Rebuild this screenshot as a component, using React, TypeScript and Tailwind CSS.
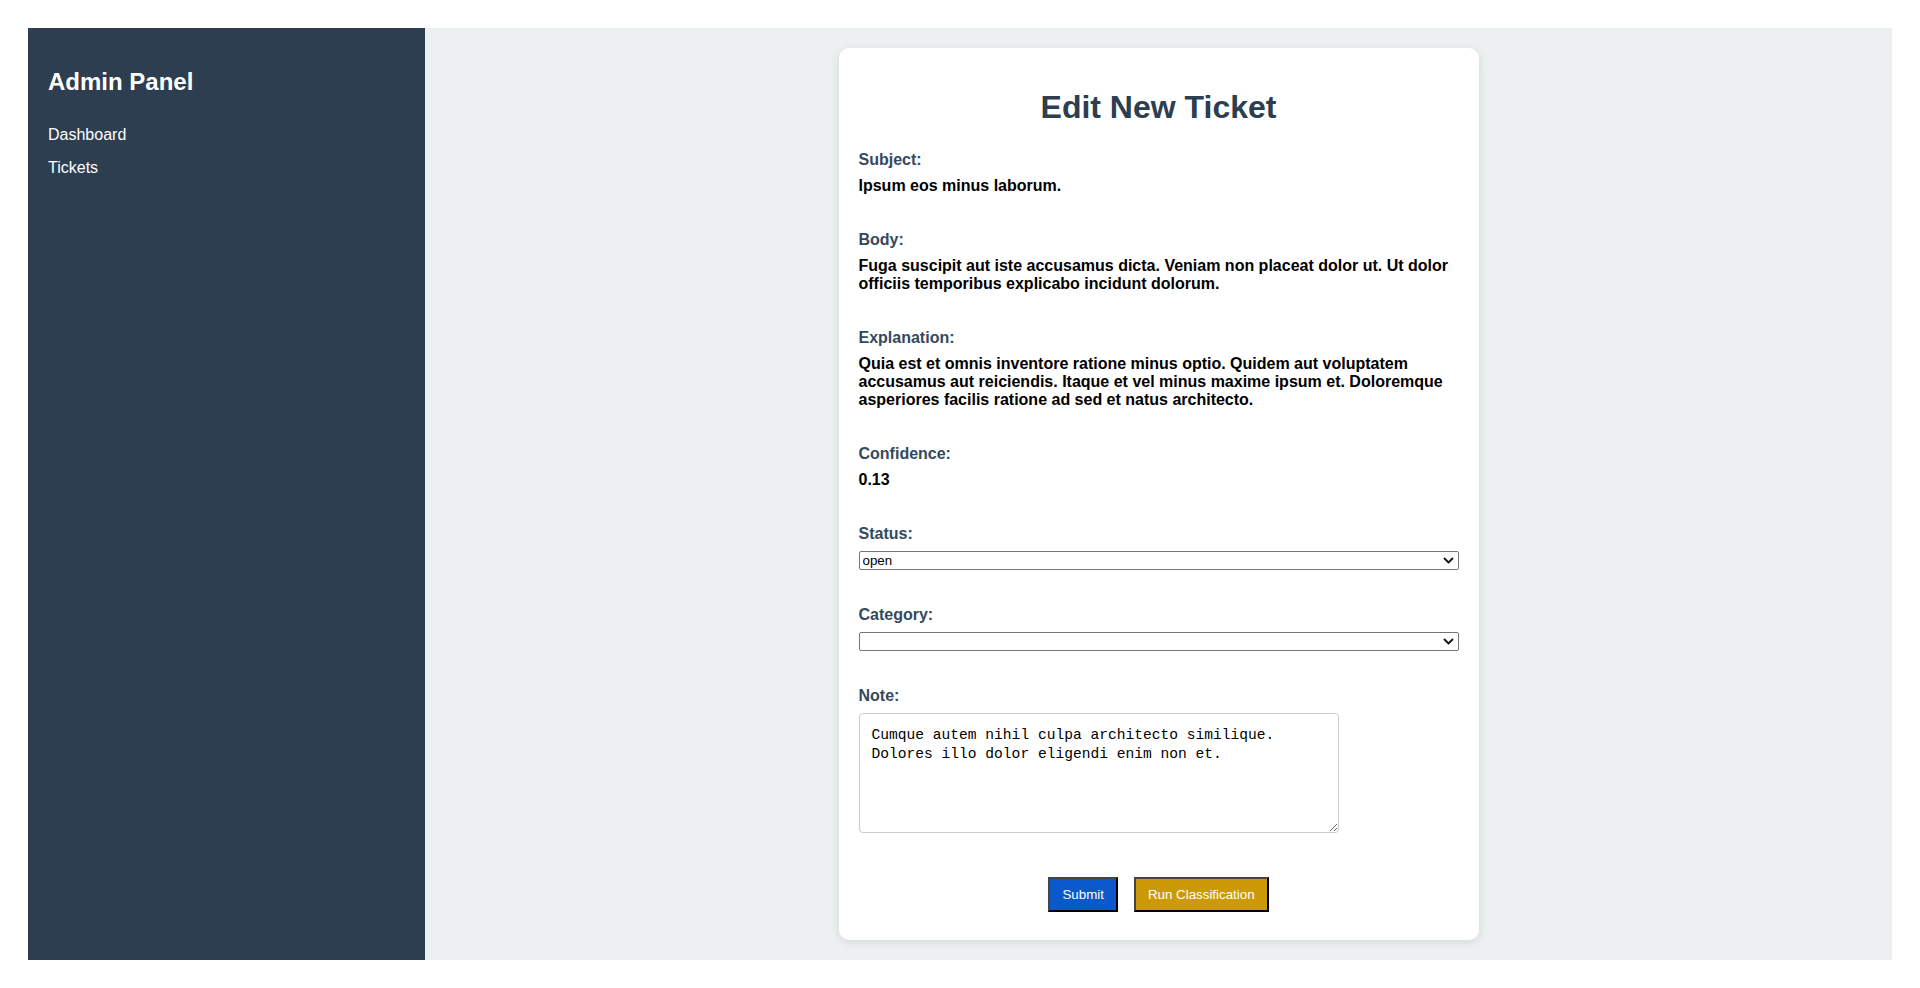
import React, { useState } from 'react';

const fields = [
  { label: 'Subject:', value: 'Ipsum eos minus laborum.' },
  {
    label: 'Body:',
    value:
      'Fuga suscipit aut iste accusamus dicta. Veniam non placeat dolor ut. Ut dolor officiis temporibus explicabo incidunt dolorum.',
  },
  {
    label: 'Explanation:',
    value:
      'Quia est et omnis inventore ratione minus optio. Quidem aut voluptatem accusamus aut reiciendis. Itaque et vel minus maxime ipsum et. Doloremque asperiores facilis ratione ad sed et natus architecto.',
  },
  { label: 'Confidence:', value: '0.13' },
];

const Label = ({ children }: { children: React.ReactNode }) => (
  <label className="block mb-2 text-base font-bold leading-[normal] text-[#34495e]">{children}</label>
);

// select with the bold chevron drawn over its right end
const Select = ({
  value,
  onChange,
  options,
}: {
  value: string;
  onChange: (v: string) => void;
  options: string[];
}) => (
  <div className="relative">
    <select
      value={value}
      onChange={(e) => onChange(e.target.value)}
      className="block h-[19px] w-full appearance-none rounded-[2px] border border-[#767676] bg-white pl-[3px] pr-5 py-0 text-[13.33px] leading-[normal] text-black"
    >
      {options.map((o) => (
        <option key={o} value={o}>
          {o}
        </option>
      ))}
    </select>
    <svg
      className="pointer-events-none absolute right-[5px] top-[6px]"
      width="11"
      height="7"
      viewBox="0 0 11 7"
      fill="none"
    >
      <path d="M1 1l4.5 4.5L10 1" stroke="#111" strokeWidth="1.8" />
    </svg>
  </div>
);

export default function App() {
  const [status, setStatus] = useState('open');
  const [category, setCategory] = useState('');
  const [note, setNote] = useState(
    'Cumque autem nihil culpa architecto similique.\nDolores illo dolor eligendi enim non et.'
  );

  return (
    <div className="bg-white p-[28px] font-['Liberation_Sans',Arial,sans-serif]">
      <div className="flex h-[932px]">
        {/* Sidebar */}
        <aside className="w-[397px] shrink-0 bg-[#2c3e50] px-5 pt-5 text-white">
          <h2 className="mt-5 text-2xl font-bold leading-[normal]">Admin Panel</h2>
          <ul className="mt-[30px] flex flex-col gap-[14.5px] text-base leading-[normal]">
            <li>
              <a href="#">Dashboard</a>
            </li>
            <li>
              <a href="#">Tickets</a>
            </li>
          </ul>
        </aside>

        {/* Main */}
        <main className="flex-1 bg-[#ecf0f1] pt-5 flex justify-center items-start">
          <div className="w-[640px] rounded-[10px] bg-white p-5 pb-7 shadow-[0_2px_10px_rgba(0,0,0,0.1)]">
            <h2 className="mt-[21px] mb-[25px] text-center text-[32px] font-bold leading-[normal] text-[#2c3e50]">
              Edit New Ticket
            </h2>

            <div className="flex flex-col gap-[36px]">
              {fields.map((f) => (
                <div key={f.label}>
                  <Label>{f.label}</Label>
                  <p className="text-base font-bold leading-[normal] text-black">{f.value}</p>
                </div>
              ))}

              <div>
                <Label>Status:</Label>
                <Select value={status} onChange={setStatus} options={['open', 'closed']} />
              </div>

              <div>
                <Label>Category:</Label>
                <Select value={category} onChange={setCategory} options={['', 'billing', 'technical']} />
              </div>

              <div>
                <Label>Note:</Label>
                <textarea
                  value={note}
                  onChange={(e) => setNote(e.target.value)}
                  className="block h-[120px] w-[80%] rounded-[4px] border border-[#cccccc] p-3 font-['Liberation_Mono',monospace] text-[14.6px] leading-[19px] text-black"
                />
              </div>
            </div>

            <div className="mt-[44px] flex justify-center gap-4">
              <button className="border-2 border-t-[#444] border-l-[#444] border-b-black border-r-black bg-[#0a58ca] px-3 py-2 text-[13.33px] leading-[normal] text-white">
                Submit
              </button>
              <button className="border-2 border-t-[#444] border-l-[#444] border-b-black border-r-black bg-[#cc9a06] px-3 py-2 text-[13.33px] leading-[normal] text-white">
                Run Classification
              </button>
            </div>
          </div>
        </main>
      </div>
    </div>
  );
}
